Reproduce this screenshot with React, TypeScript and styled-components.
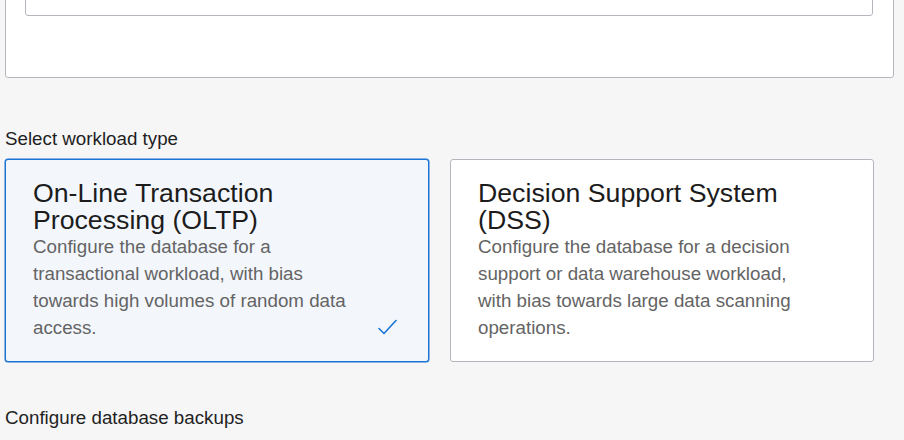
import React from "react";
import styled, { createGlobalStyle } from "styled-components";

const Global = createGlobalStyle`
  html, body {
    margin: 0;
    padding: 0;
    background: #f6f6f6;
    font-family: "Liberation Sans", Arial, sans-serif;
    overflow: hidden;
  }
`;

const Page = styled.div`
  width: 904px;
  height: 440px;
  padding-left: 5px;
  box-sizing: border-box;
  overflow: hidden;
`;

const Panel = styled.div`
  margin-top: -82px;
  width: 889px;
  box-sizing: border-box;
  background: #fff;
  border: 1px solid #b3b7bd;
  border-radius: 3px;
  padding: 20px 20px 61px 19px;
`;

const Field = styled.div`
  height: 75px;
  background: #fff;
  border: 1px solid #b3b7bd;
  border-radius: 3px;
`;

const SectionLabel = styled.div<{ $top: number }>`
  margin-top: ${(p) => p.$top}px;
  font-size: 18.75px;
  line-height: 22px;
  color: #1f1f1f;
`;

const CardRow = styled.div`
  margin-top: 9px;
  width: 869px;
  display: grid;
  grid-template-columns: 424px 424px;
  column-gap: 21px;
`;

const Card = styled.div<{ $selected?: boolean }>`
  position: relative;
  box-sizing: border-box;
  height: 203px;
  padding: 20px 28px 20px 27px;
  border: 1px solid ${(p) => (p.$selected ? "#1b73d3" : "#b3b7bd")};
  border-radius: 3px;
  background: ${(p) => (p.$selected ? "#f3f7fc" : "#ffffff")};
  box-shadow: ${(p) => (p.$selected ? "0 0 0 0.5px #1b73d3" : "none")};
`;

const Title = styled.div`
  font-size: 26.7px;
  line-height: 1;
  color: #1c1c1c;
`;

const Desc = styled.div`
  font-size: 18.75px;
  line-height: 27px;
  color: #646464;
`;

const Check = styled.svg`
  position: absolute;
  right: 31px;
  bottom: 26px;
  width: 19px;
  height: 16px;
`;

export default function App() {
  return (
    <>
      <Global />
      <Page>
        <Panel>
          <Field />
        </Panel>
        <SectionLabel $top={50}>Select workload type</SectionLabel>
        <CardRow>
          <Card $selected>
            <Title>
              On-Line Transaction
              <br />
              Processing (OLTP)
            </Title>
            <Desc>
              Configure the database for a
              <br />
              transactional workload, with bias
              <br />
              towards high volumes of random data
              <br />
              access.
            </Desc>
            <Check viewBox="0 0 19 16" fill="none">
              <path
                d="M1 9.5 L6 14.5 L18 1.5"
                stroke="#1b73d3"
                strokeWidth="1.6"
                strokeLinecap="round"
                strokeLinejoin="round"
              />
            </Check>
          </Card>
          <Card>
            <Title>
              Decision Support System
              <br />
              (DSS)
            </Title>
            <Desc>
              Configure the database for a decision
              <br />
              support or data warehouse workload,
              <br />
              with bias towards large data scanning
              <br />
              operations.
            </Desc>
          </Card>
        </CardRow>
        <SectionLabel $top={45}>Configure database backups</SectionLabel>
      </Page>
    </>
  );
}
